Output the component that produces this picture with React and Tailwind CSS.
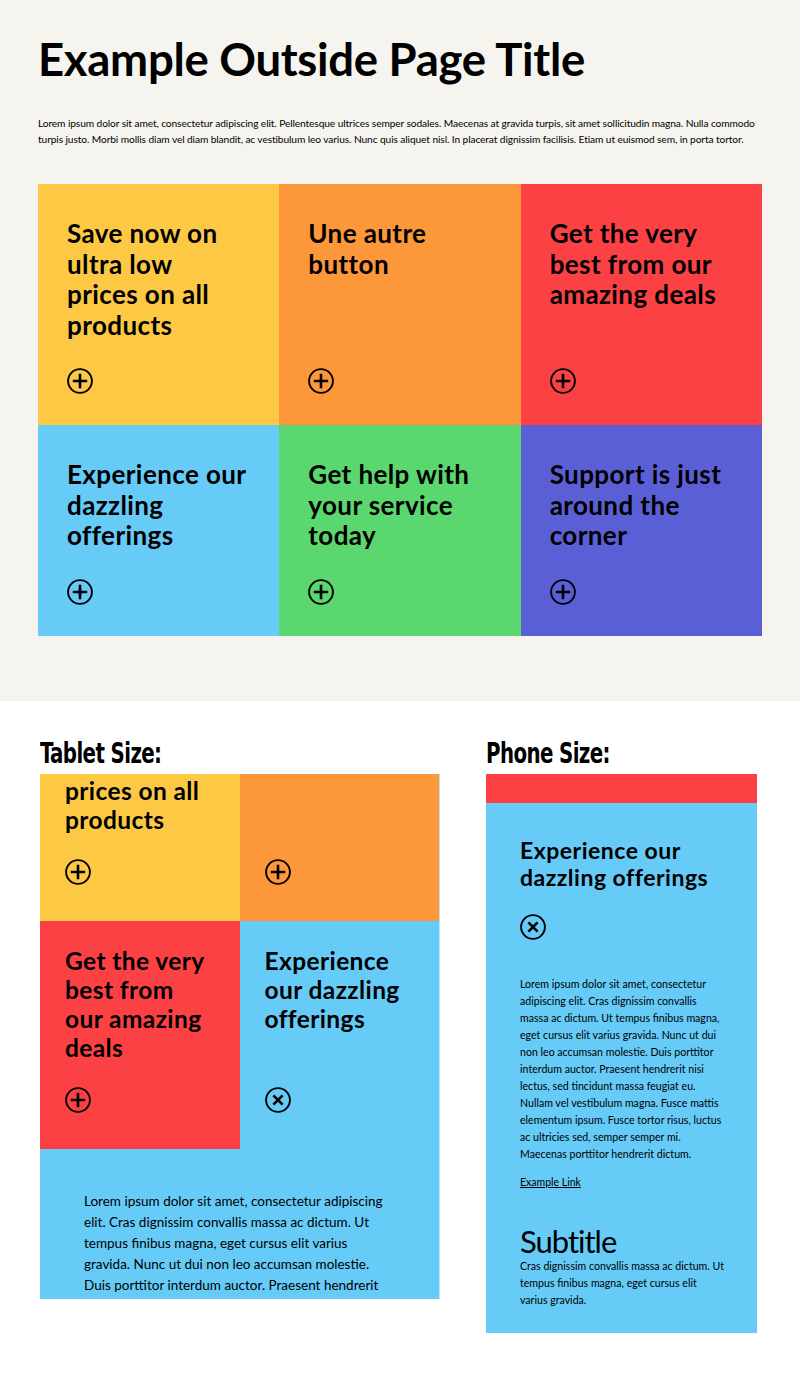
import React from "react";

const desktopTiles = [
  { bg: "bg-[#fdc945]", lines: ["Save now on", "ultra low", "prices on all", "products"] },
  { bg: "bg-[#fc973a]", lines: ["Une autre", "button"] },
  { bg: "bg-[#fc4145]", lines: ["Get the very", "best from our", "amazing deals"] },
  { bg: "bg-[#66cbf7]", lines: ["Experience our", "dazzling", "offerings"] },
  { bg: "bg-[#5ad86f]", lines: ["Get help with", "your service", "today"] },
  { bg: "bg-[#5b5fd5]", lines: ["Support is just", "around the", "corner"] },
];

const tabletTiles = [
  { bg: "bg-[#fdc945]", lines: ["Save now on", "ultra low", "prices on all", "products"] },
  { bg: "bg-[#fc973a]", lines: ["Une autre", "button"] },
  { bg: "bg-[#fc4145]", lines: ["Get the very", "best from", "our amazing", "deals"] },
  { bg: "bg-[#66cbf7]", lines: ["Experience", "our dazzling", "offerings"], open: true },
];

const introLines = [
  "Lorem ipsum dolor sit amet, consectetur adipiscing elit. Pellentesque ultrices semper sodales. Maecenas at gravida turpis, sit amet sollicitudin magna. Nulla commodo",
  "turpis justo. Morbi mollis diam vel diam blandit, ac vestibulum leo varius. Nunc quis aliquet nisl. In placerat dignissim facilisis. Etiam ut euismod sem, in porta tortor.",
];

const tabletBody = [
  "Lorem ipsum dolor sit amet, consectetur adipiscing",
  "elit. Cras dignissim convallis massa ac dictum. Ut",
  "tempus finibus magna, eget cursus elit varius",
  "gravida. Nunc ut dui non leo accumsan molestie.",
  "Duis porttitor interdum auctor. Praesent hendrerit",
  "nisi lectus, sed tincidunt massa feugiat eu.",
];

const phoneBody = [
  "Lorem ipsum dolor sit amet, consectetur",
  "adipiscing elit. Cras dignissim convallis",
  "massa ac dictum. Ut tempus finibus magna,",
  "eget cursus elit varius gravida. Nunc ut dui",
  "non leo accumsan molestie. Duis porttitor",
  "interdum auctor. Praesent hendrerit nisi",
  "lectus, sed tincidunt massa feugiat eu.",
  "Nullam vel vestibulum magna. Fusce mattis",
  "elementum ipsum. Fusce tortor risus, luctus",
  "ac ultricies sed, semper semper mi.",
  "Maecenas porttitor hendrerit dictum.",
];

const subtitleBody = [
  "Cras dignissim convallis massa ac dictum. Ut",
  "tempus finibus magna, eget cursus elit",
  "varius gravida.",
];

// circled plus / circled x, drawn to match the flat icons in the mockup
const CircleIcon = ({ open }) => (
  <svg width="26" height="26" viewBox="0 0 26 26" fill="none" stroke="#000">
    <circle cx="13" cy="13" r="11.9" strokeWidth="1.9" />
    {open ? (
      <path d="M8.4 8.4l9.2 9.2M17.6 8.4l-9.2 9.2" strokeWidth="2.6" />
    ) : (
      <path d="M13 5.8v14.4M5.8 13h14.4" strokeWidth="2.6" />
    )}
  </svg>
);

const Lines = ({ lines }) =>
  lines.map((line, i) => (
    <span key={i} className="block whitespace-nowrap">
      {line}
    </span>
  ));

const SizeLabel = ({ children }) => (
  <h2 className="h-[24px] mb-[10px] font-[family-name:'DejaVu_Sans_Condensed',sans-serif] font-bold text-[22px] leading-[22px] tracking-[-0.6px] text-black origin-top-left scale-y-[1.3]">
    {children}
  </h2>
);

const App = () => {
  return (
    <div className="w-[800px] min-h-[1387px] bg-white text-black font-[family-name:Lato,'Open_Sans',sans-serif]">
      {/* outside page */}
      <section className="bg-[#f5f4ee] pt-[36px] pb-[65px]">
        <h1 className="px-[38px] text-[45.5px] leading-[45px] font-bold tracking-[-0.3px]">
          Example Outside Page Title
        </h1>
        <p className="px-[38px] mt-[35px] text-[10.2px] leading-[15.5px] tracking-[-0.1px]">
          <Lines lines={introLines} />
        </p>
        <div className="mt-[37px] ml-[38px] w-[724px] grid grid-cols-3">
          {desktopTiles.map((tile, i) => (
            <div key={i} className={`${tile.bg} flex flex-col px-[29px] pt-[34px] pb-[31px]`}>
              <h3 className="text-[26px] leading-[30.5px] font-bold tracking-[0.4px]">
                <Lines lines={tile.lines} />
              </h3>
              <div className="mt-auto pt-[28px]">
                <CircleIcon />
              </div>
            </div>
          ))}
        </div>
      </section>

      {/* breakpoints */}
      <section className="flex gap-[46px] px-[40px] pt-[39px] pb-[55px]">
        <div className="w-[400px]">
          <SizeLabel>Tablet Size:</SizeLabel>
          <div className="h-[525px] overflow-hidden border-r border-[#b9e4f7]">
            <div className="-mt-[81px] grid grid-cols-2">
              {tabletTiles.map((tile, i) => (
                <div key={i} className={`${tile.bg} flex flex-col px-[25px] pt-[25px] pb-[36px]`}>
                  <h3 className="text-[24.5px] leading-[29px] font-bold tracking-[0.4px]">
                    <Lines lines={tile.lines} />
                  </h3>
                  <div className="mt-auto pt-[25px]">
                    <CircleIcon open={tile.open} />
                  </div>
                </div>
              ))}
              <div className="col-span-2 bg-[#66cbf7] pl-[44px] pr-[30px] pt-[42px] pb-[40px]">
                <p className="text-[13.5px] leading-[21px]">
                  <Lines lines={tabletBody} />
                </p>
              </div>
            </div>
          </div>
        </div>

        <div className="w-[271px]">
          <SizeLabel>Phone Size:</SizeLabel>
          <div className="h-[559px] overflow-hidden">
            <div className="h-[29px] bg-[#fc4145]" />
            <div className="h-[530px] bg-[#66cbf7] pl-[34px] pr-[20px] pt-[34px]">
              <h3 className="text-[23px] leading-[27px] font-bold tracking-[0.5px]">
                <Lines lines={["Experience our", "dazzling offerings"]} />
              </h3>
              <div className="mt-[23px]">
                <CircleIcon open />
              </div>
              <p className="mt-[36px] text-[10.6px] leading-[17px]">
                <Lines lines={phoneBody} />
              </p>
              <a href="#" className="block mt-[11px] text-[10.5px] leading-[17px] underline">
                Example Link
              </a>
              <h4 className="mt-[34px] text-[31px] leading-[32px] font-normal tracking-[-1px]">
                Subtitle
              </h4>
              <p className="mt-[1px] text-[10.6px] leading-[17px]">
                <Lines lines={subtitleBody} />
              </p>
            </div>
          </div>
        </div>
      </section>
    </div>
  );
};

export default App;
